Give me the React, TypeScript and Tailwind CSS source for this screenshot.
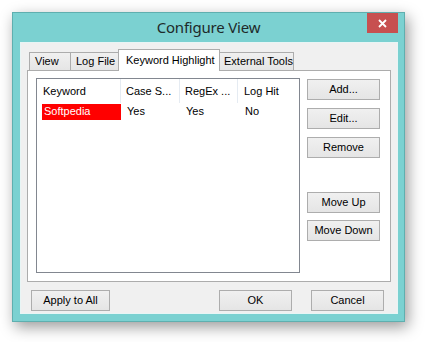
import React from "react";

const btn =
  "h-[21px] flex items-center justify-center border border-[#adadad] bg-gradient-to-b from-[#f0f0f0] to-[#e5e5e5] text-[11px] text-black";

function Btn({ label, w, primary }: { label: string; w: string; primary?: boolean }) {
  return (
    <div className={`${btn} ${w} ${primary ? "border-[#3399ff]" : ""}`}>
      {label}
    </div>
  );
}

export default function App() {
  return (
    <div className="w-[425px] h-[342px] bg-white p-3 font-['Liberation_Sans',Arial,sans-serif]">
      <div className="w-[393px] h-[310px] bg-[#7bd1d1] border border-[#5fafaf] shadow-[3px_5px_14px_rgba(0,0,0,0.4)] flex flex-col">
        {/* title bar */}
        <div className="relative h-[29px] flex items-center justify-center">
          <span className="font-['Noto_Sans',sans-serif] text-[15px] text-[#1e2a2a] tracking-[-0.2px]">
            Configure View
          </span>
          <div className="absolute top-0 right-[6px] w-[31px] h-[20px] bg-[#c75050] flex items-center justify-center">
            <svg width="9" height="9" viewBox="0 0 9 9">
              <path d="M1 1 L8 8 M8 1 L1 8" stroke="white" strokeWidth="1.8" />
            </svg>
          </div>
        </div>
        {/* client */}
        <div className="ml-[7px] w-[378px] h-[272px] bg-[#f0f0f0] border border-[#e8f5f5] flex flex-col">
          {/* tabs */}
          <div className="mt-[6px] ml-[7px] h-[21px] flex items-end relative z-10">
            <div className="w-[42px] h-[18px] border border-[#acacac] border-b-0 bg-gradient-to-b from-[#f0f0f0] to-[#e5e5e5] text-[11px] flex items-center pl-[5px] ml-[1px]">
              View
            </div>
            <div className="w-[48px] h-[18px] border border-[#acacac] border-b-0 border-l-0 bg-gradient-to-b from-[#f0f0f0] to-[#e5e5e5] text-[11px] flex items-center pl-[5px]">
              Log File
            </div>
            <div className="w-[102px] h-[21px] border border-[#acacac] border-b-0 bg-white text-[11px] flex items-start pt-[2px] pl-[7px] -ml-px -mb-px h-[22px]">
              Keyword Highlight
            </div>
            <div className="w-[74px] h-[18px] border border-[#acacac] border-b-0 border-l-0 bg-gradient-to-b from-[#f0f0f0] to-[#e5e5e5] text-[11px] flex items-center pl-[4px]">
              External Tools
            </div>
          </div>
          {/* panel */}
          <div className="ml-[6px] w-[364px] h-[212px] bg-white border border-[#acacac] flex pt-[7px] pl-[8px]">
            {/* list */}
            <div className="w-[264px] h-[195px] border border-[#828790] bg-white text-[11px] flex flex-col">
              <div className="h-[24px] flex items-stretch">
                <div className="w-[84px] flex items-center pl-[6px] border-r border-[#e5ebf2]">Keyword</div>
                <div className="w-[59px] flex items-center pl-[5px] border-r border-[#e5ebf2]">Case S...</div>
                <div className="w-[58px] flex items-center pl-[5px] border-r border-[#e5ebf2]">RegEx ...</div>
                <div className="flex items-center pl-[6px]">Log Hit</div>
              </div>
              <div className="h-[17px] flex items-center">
                <div className="ml-[5px] w-[79px] h-[16px] bg-[#ff0000] text-white flex items-center pl-[2px]">Softpedia</div>
                <div className="w-[59px] pl-[6px]">Yes</div>
                <div className="w-[59px] pl-[6px]">Yes</div>
                <div className="pl-[6px]">No</div>
              </div>
            </div>
            {/* buttons */}
            <div className="ml-[7px] flex flex-col">
              <div className="mt-[1px]"><Btn label="Add..." w="w-[73px]" primary /></div>
              <div className="mt-[8px]"><Btn label="Edit..." w="w-[73px]" /></div>
              <div className="mt-[8px]"><Btn label="Remove" w="w-[73px]" /></div>
              <div className="mt-[34px]"><Btn label="Move Up" w="w-[73px]" /></div>
              <div className="mt-[7px]"><Btn label="Move Down" w="w-[73px]" /></div>
            </div>
          </div>
          {/* bottom buttons */}
          <div className="mt-[8px] flex">
            <div className="ml-[10px]"><Btn label="Apply to All" w="w-[79px]" /></div>
            <div className="ml-[109px]"><Btn label="OK" w="w-[73px]" /></div>
            <div className="ml-[19px]"><Btn label="Cancel" w="w-[73px]" /></div>
          </div>
        </div>
      </div>
    </div>
  );
}
